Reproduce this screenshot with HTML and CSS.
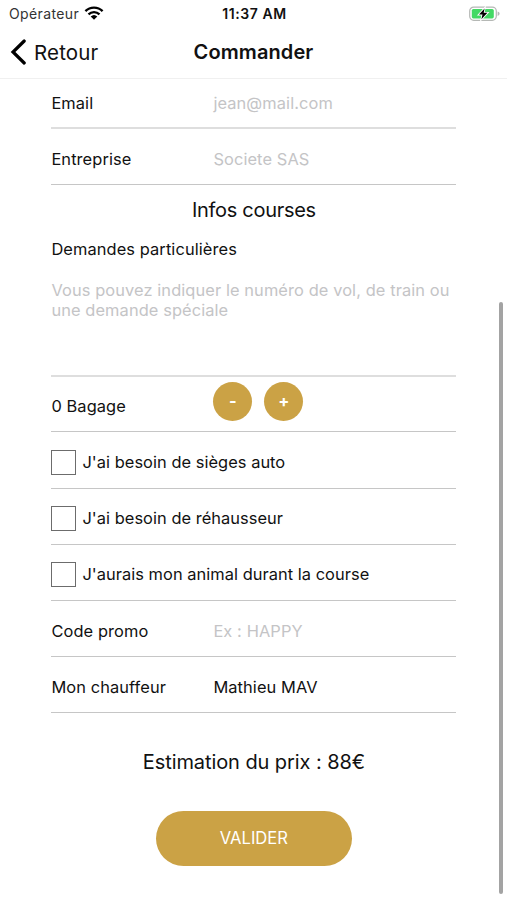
FILE: index.html
```html
<!DOCTYPE html>
<html lang="fr">
<head>
<meta charset="utf-8">
<title>Commander</title>
<link rel="stylesheet" href="styles.css">
</head>
<body>
<div class="status">
  <div class="carrier"><span>Opérateur</span>
    <svg class="wifi" width="20" height="14" viewBox="0 0 20 14"><g fill="none" stroke="#000" stroke-width="2.3"><path d="M1.4 5.1A12.3 12.3 0 0 1 18.6 5.1"/><path d="M4.5 8.3A7.9 7.9 0 0 1 15.5 8.3"/></g><path d="M6.7 10.5a4.8 4.8 0 0 1 6.6 0L10 13.8z"/></svg>
  </div>
  <span class="time">11:37 AM</span>
  <svg class="battery" width="31" height="16" viewBox="0 0 31 16"><rect x=".7" y="1.1" width="26.6" height="13.2" rx="4" fill="#fff" stroke="#b5b8b5" stroke-width="1.2"/><rect x="2.8" y="3" width="22" height="9.4" rx="1.6" fill="#43d964"/><path d="M28.6 5.5q2 .6 2 2.2t-2 2.2z" fill="#b5b8b5"/><path d="M15.6 2.4L10 8.5h3.5l-1.1 4.7 6-6.4h-3.7z" fill="#000" stroke="#fff" stroke-width="1.8" paint-order="stroke"/></svg>
</div>
<header class="nav">
  <a class="back"><svg width="16" height="26" viewBox="0 0 16 26"><path d="M14.2 2L3 13 14.2 24" fill="none" stroke="#000" stroke-width="3.2" stroke-linecap="round"/></svg><span>Retour</span></a>
  <h1>Commander</h1>
</header>
<main class="form">
  <div class="row email"><span>Email</span><span class="hint">jean@mail.com</span></div>
  <div class="row company"><span>Entreprise</span><span class="hint">Societe SAS</span></div>
  <h2>Infos courses</h2>
  <div class="request">
    <label>Demandes particulières</label>
    <p class="hint">Vous pouvez indiquer le numéro de vol, de train ou<br>une demande spéciale</p>
  </div>
  <div class="row luggage"><span>0 Bagage</span><div class="stepper"><b>-</b><b>+</b></div></div>
  <div class="row check"><i></i><span>J'ai besoin de sièges auto</span></div>
  <div class="row check"><i></i><span>J'ai besoin de réhausseur</span></div>
  <div class="row check"><i></i><span>J'aurais mon animal durant la course</span></div>
  <div class="row"><span>Code promo</span><span class="hint">Ex : HAPPY</span></div>
  <div class="row"><span>Mon chauffeur</span><span>Mathieu MAV</span></div>
  <p class="price">Estimation du prix : 88€</p>
  <button class="submit">VALIDER</button>
</main>
<div class="scrollbar"></div>
</body>
</html>
```
FILE: styles.css
```css
* { box-sizing: border-box; margin: 0; padding: 0; }
body { height: 900px; overflow: hidden; background: #fff; color: #111; font: 16.4px/20px Inter, "Liberation Sans", sans-serif; letter-spacing: .1px; white-space: nowrap; }
.status { height: 27px; display: grid; grid-template-columns: 1fr auto 1fr; align-items: center; padding: 0 7px 0 9px; }
.carrier { display: flex; align-items: center; gap: 5px; font-size: 14px; letter-spacing: .37px; color: #333; }
.wifi { margin-top: -1px; }
.time { font-size: 14px; font-weight: 600; letter-spacing: .6px; }
.battery { justify-self: end; }
.nav { height: 52px; display: grid; grid-template-columns: 1fr auto 1fr; align-items: center; padding: 0 10px; border-bottom: 1px solid #f0f0f0; }
.back { display: flex; align-items: center; gap: 8px; font-size: 20.5px; letter-spacing: .15px; }
.back svg { margin-top: -2px; }
h1 { font-size: 20px; font-weight: 600; line-height: 26px; margin-top: -1px; }
.form { width: 405px; margin-left: 51.4px; display: flex; flex-direction: column; }
.row { height: 56.17px; flex: none; display: grid; grid-template-columns: 162px 1fr; align-items: center; border-bottom: 1px solid #c6c6c6; padding-top: 5px; }
.email { height: 50px; border-bottom: 2px solid #dedede; padding-top: 0; }
.hint { color: #c4c4c6; }
h2 { font-size: 20px; font-weight: 400; line-height: 26px; letter-spacing: -.3px; text-align: center; margin-top: 12px; }
.request { height: 154px; padding-top: 16px; border-bottom: 2px solid #dedede; }
.request label { display: block; }
.request p { margin-top: 21px; }
.luggage { height: 55.3px; padding-top: 3px; }
.stepper { display: flex; gap: 12px; margin-top: -8px; }
.stepper b { width: 39px; height: 39px; border-radius: 50%; background: #cba245; color: #fff; font-weight: 700; line-height: 39px; text-align: center; }
.check { grid-template-columns: 25px 1fr; column-gap: 6px; letter-spacing: .05px; }
.check span { margin-top: -1px; }
.check i { width: 25px; height: 25px; border: 1px solid #6c6c6c; }
.price { font-size: 20px; line-height: 26px; letter-spacing: -.08px; text-align: center; margin-top: 36px; }
.submit { width: 196px; height: 55px; margin: 36px auto 0; padding-bottom: 1px; border: 0; border-radius: 28px; background: #cba245; color: #fff; font: 400 16.6px Inter, sans-serif; }
.scrollbar { position: absolute; left: 499px; top: 302px; width: 4px; height: 592px; border-radius: 2px; background: #a3a3a3; }
```
